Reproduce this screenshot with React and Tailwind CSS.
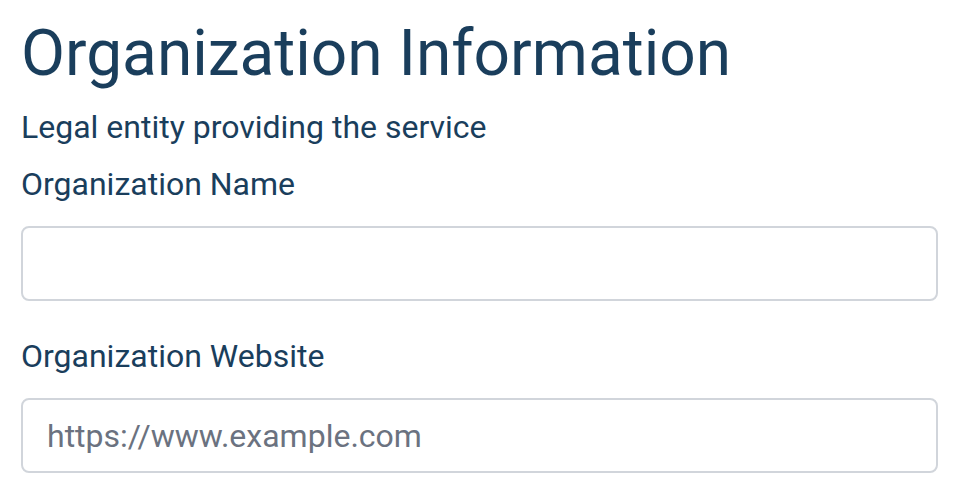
export default function App() {
    return (
        <div className="min-h-[494px] bg-white pl-[21px] pr-[30px] pt-[16px] font-['Roboto',sans-serif] text-[#1a3e5c]">
            <h1 className="text-[64px] leading-[76px] font-normal">Organization Information</h1>
            <p className="mt-[15px] text-[32px] leading-[40px]">Legal entity providing the service</p>

            <div className="mt-[17px]">
                <label className="block text-[32px] leading-[40px]">Organization Name</label>
                <input
                    type="text"
                    className="mt-[22px] block h-[75px] w-full rounded-[8px] border-2 border-[#d1d5db] px-[24px] text-[32px] outline-none"
                />
            </div>

            <div className="mt-[35px]">
                <label className="block text-[32px] leading-[40px]">Organization Website</label>
                <input
                    type="text"
                    placeholder="https://www.example.com"
                    className="mt-[22px] block h-[75px] w-full rounded-[8px] border-2 border-[#d1d5db] px-[24px] text-[32px] text-[#1a3e5c] placeholder:text-[#6b7280] outline-none"
                />
            </div>
        </div>
    );
}
